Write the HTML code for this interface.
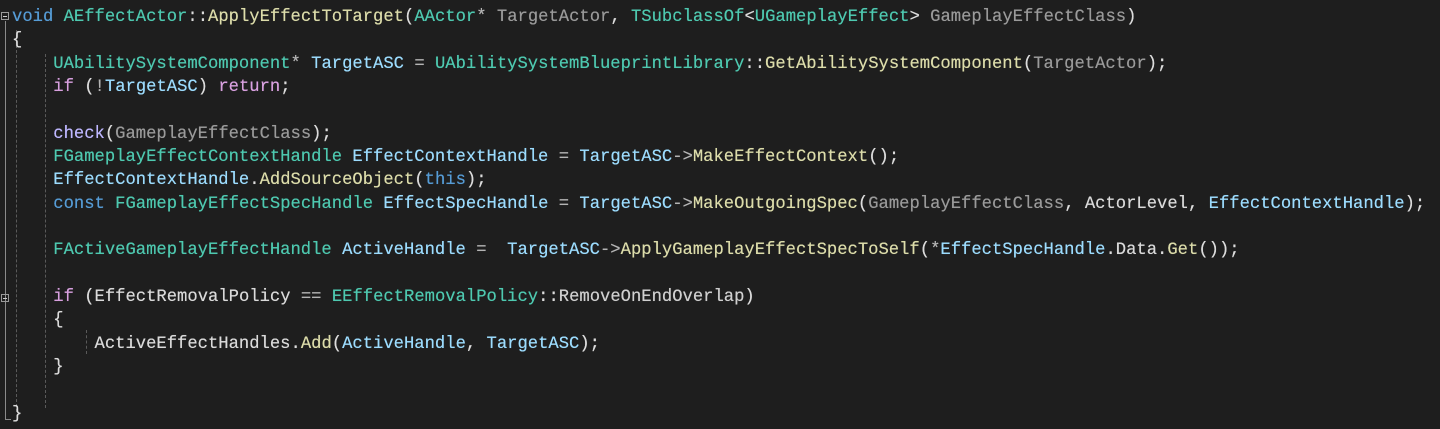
<!DOCTYPE html>
<html><head><meta charset="utf-8"><style>
html,body{margin:0;padding:0;background:#1e1e1e;width:1440px;height:429px;overflow:hidden}
pre{position:absolute;left:12px;top:6px;margin:0;font-family:"Liberation Mono",monospace;font-size:17.2px;line-height:23.35px;color:#dcdcdc;white-space:pre;text-shadow:0 0 0.4px currentColor}
.k{color:#569cd6}.c{color:#4ec9b0}.f{color:#dcdcaa}.v{color:#9cdcfe}.p{color:#9a9a9a}.r{color:#d8a0df}.m{color:#beb7ff}.o{color:#b4b4b4}.d{color:#dadada}.e{color:#d0d0d0}
.g{position:absolute;border-left:1px dashed #5a5a5a;width:0}
.fold{position:absolute;width:8px;height:8px;border:1px solid #999;box-sizing:border-box;left:1px}
.fold:after{content:"";position:absolute;left:1px;right:1px;top:3px;height:1px;background:#ccc}
.ln{position:absolute;background:#8a8a8a;width:1px}
</style></head><body>
<div class="fold" style="top:12px"></div>
<div class="ln" style="left:5px;top:21px;height:398px"></div>
<div class="ln" style="left:5px;top:419px;width:6px;height:1px"></div>
<div class="fold" style="top:294px"></div>
<div class="g" style="left:16px;top:30px;height:382px"></div>
<div class="g" style="left:45px;top:54px;height:354px"></div>
<div class="g" style="left:86px;top:330px;height:24px"></div>
<pre><span class="k">void</span> <span class="c">AEffectActor</span>::<span class="f">ApplyEffectToTarget</span>(<span class="c">AActor</span><span class="o">*</span> <span class="p">TargetActor</span>, <span class="c">TSubclassOf</span><<span class="c">UGameplayEffect</span>> <span class="p">GameplayEffectClass</span>)
{
    <span class="c">UAbilitySystemComponent</span><span class="o">*</span> <span class="v">TargetASC</span> <span class="o">=</span> <span class="c">UAbilitySystemBlueprintLibrary</span>::<span class="f">GetAbilitySystemComponent</span>(<span class="p">TargetActor</span>);
    <span class="r">if</span> (<span class="o">!</span><span class="v">TargetASC</span>) <span class="r">return</span>;

    <span class="m">check</span>(<span class="p">GameplayEffectClass</span>);
    <span class="c">FGameplayEffectContextHandle</span> <span class="v">EffectContextHandle</span> <span class="o">=</span> <span class="v">TargetASC</span><span class="o">-></span><span class="f">MakeEffectContext</span>();
    <span class="v">EffectContextHandle</span>.<span class="f">AddSourceObject</span>(<span class="k">this</span>);
    <span class="k">const</span> <span class="c">FGameplayEffectSpecHandle</span> <span class="v">EffectSpecHandle</span> <span class="o">=</span> <span class="v">TargetASC</span><span class="o">-></span><span class="f">MakeOutgoingSpec</span>(<span class="p">GameplayEffectClass</span>, <span class="d">ActorLevel</span>, <span class="v">EffectContextHandle</span>);

    <span class="c">FActiveGameplayEffectHandle</span> <span class="v">ActiveHandle</span> <span class="o">=</span>  <span class="v">TargetASC</span><span class="o">-></span><span class="f">ApplyGameplayEffectSpecToSelf</span>(<span class="o">*</span><span class="v">EffectSpecHandle</span>.<span class="d">Data</span>.<span class="f">Get</span>());

    <span class="r">if</span> (<span class="d">EffectRemovalPolicy</span> <span class="o">==</span> <span class="c">EEffectRemovalPolicy</span>::<span class="e">RemoveOnEndOverlap</span>)
    {
        <span class="d">ActiveEffectHandles</span>.<span class="f">Add</span>(<span class="v">ActiveHandle</span>, <span class="v">TargetASC</span>);
    }

}</pre>
</body></html>
